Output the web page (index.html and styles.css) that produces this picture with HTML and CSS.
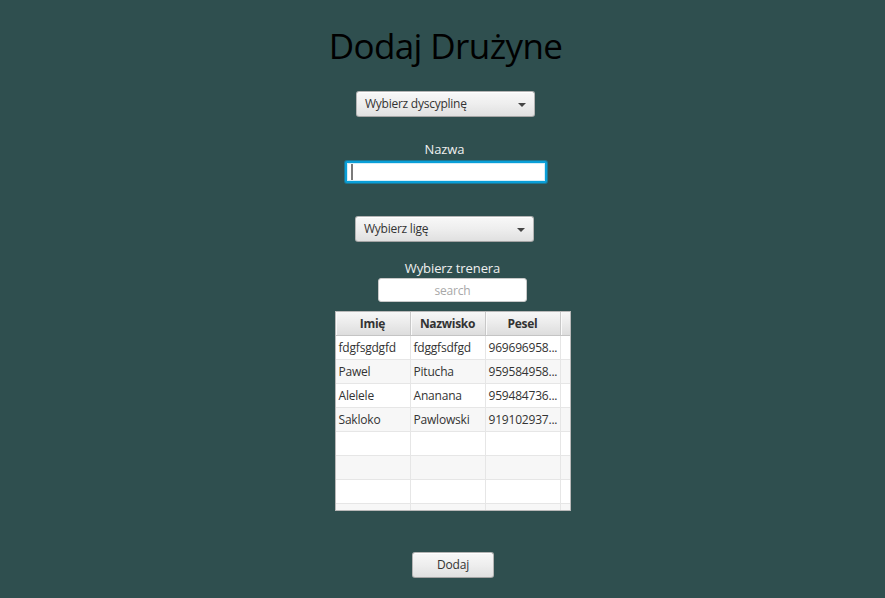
FILE: index.html
```html
<!DOCTYPE html>
<html lang="pl">
<head>
<meta charset="utf-8">
<title>Dodaj Drużyne</title>
<link rel="stylesheet" href="styles.css">
</head>
<body>
<main class="form">
  <h1 class="title">Dodaj Drużyne</h1>

  <div class="combo combo-discipline">
    <span class="combo-text">Wybierz dyscyplinę</span>
    <span class="combo-arrow"></span>
  </div>

  <label class="label label-name">Nazwa</label>
  <div class="field"><span class="caret"></span></div>

  <div class="combo combo-league">
    <span class="combo-text">Wybierz ligę</span>
    <span class="combo-arrow"></span>
  </div>

  <label class="label label-coach">Wybierz trenera</label>
  <div class="search">search</div>

  <div class="table">
    <div class="row head">
      <div class="cell c1">Imię</div>
      <div class="cell c2">Nazwisko</div>
      <div class="cell c3">Pesel</div>
      <div class="cell c4"></div>
    </div>
    <div class="row">
      <div class="cell c1">fdgfsgdgfd</div>
      <div class="cell c2">fdggfsdfgd</div>
      <div class="cell c3">969696958...</div>
      <div class="cell c4"></div>
    </div>
    <div class="row alt">
      <div class="cell c1">Pawel</div>
      <div class="cell c2">Pitucha</div>
      <div class="cell c3">959584958...</div>
      <div class="cell c4"></div>
    </div>
    <div class="row">
      <div class="cell c1">Alelele</div>
      <div class="cell c2">Ananana</div>
      <div class="cell c3">959484736...</div>
      <div class="cell c4"></div>
    </div>
    <div class="row alt">
      <div class="cell c1">Sakloko</div>
      <div class="cell c2">Pawlowski</div>
      <div class="cell c3">919102937...</div>
      <div class="cell c4"></div>
    </div>
    <div class="row">
      <div class="cell c1"></div><div class="cell c2"></div><div class="cell c3"></div><div class="cell c4"></div>
    </div>
    <div class="row alt">
      <div class="cell c1"></div><div class="cell c2"></div><div class="cell c3"></div><div class="cell c4"></div>
    </div>
    <div class="row">
      <div class="cell c1"></div><div class="cell c2"></div><div class="cell c3"></div><div class="cell c4"></div>
    </div>
    <div class="row alt">
      <div class="cell c1"></div><div class="cell c2"></div><div class="cell c3"></div><div class="cell c4"></div>
    </div>
  </div>

  <button class="button" type="button">Dodaj</button>
</main>
</body>
</html>
```

FILE: styles.css
```css
html, body {
  margin: 0;
  padding: 0;
}

body {
  background: #2f4f4f;
  width: 885px;
  height: 598px;
  overflow: hidden;
  font-family: "Open Sans", "Noto Sans", "DejaVu Sans", sans-serif;
  color: #333333;
}

.form {
  display: flex;
  flex-direction: column;
  align-items: center;
  padding-top: 24px;
}

.title {
  margin: 0 0 0 6px;
  font-size: 35px;
  line-height: 43px;
  letter-spacing: -0.6px;
  font-weight: 400;
  color: #000000;
}

.combo {
  box-sizing: border-box;
  width: 179px;
  height: 26px;
  display: flex;
  align-items: center;
  justify-content: space-between;
  padding: 0 8px 0 8px;
  border: 1px solid #b4b4b4;
  border-bottom-color: #a4a4a4;
  border-radius: 3px;
  background: linear-gradient(to bottom, #f8f8f8 0%, #eeeeee 50%, #e0e0e0 100%);
  box-shadow: inset 0 1px 0 #ffffff;
}

.combo-discipline {
  margin: 24px 0 0 6px;
}

.combo-league {
  margin: 33px 0 0 4px;
}

.combo-text {
  font-size: 12px;
  line-height: 16px;
  letter-spacing: -0.25px;
  color: #333333;
}

.combo-arrow {
  width: 0;
  height: 0;
  border-left: 4px solid transparent;
  border-right: 4px solid transparent;
  border-top: 4px solid #444444;
  margin-top: 1px;
}

.label {
  display: block;
  font-size: 13px;
  line-height: 16px;
  letter-spacing: -0.1px;
  color: #f0f0f0;
}

.label-name {
  margin: 24px 0 0 4px;
}

.label-coach {
  margin: 18px 0 0 20px;
}

.field {
  box-sizing: border-box;
  width: 202px;
  height: 22px;
  margin: 4px 0 0 6px;
  border: 2px solid #0a9fd8;
  border-radius: 2px;
  background: #ffffff;
  box-shadow: 0 0 0 1px rgba(10, 159, 216, 0.5), inset 0 0 0 1px #d4eef8;
  display: flex;
  align-items: center;
  padding-left: 4px;
}

.caret {
  display: block;
  width: 2px;
  height: 16px;
  background: #7a7a7a;
}

.search {
  box-sizing: border-box;
  width: 149px;
  height: 24px;
  margin: 2px 0 0 20px;
  border: 1px solid #c8c8c8;
  border-radius: 3px;
  background: #ffffff;
  font-size: 12px;
  line-height: 24px;
  letter-spacing: -0.2px;
  text-align: center;
  color: #a8a8a8;
}

.table {
  box-sizing: border-box;
  width: 236px;
  height: 200px;
  margin: 9px 0 0 20px;
  border: 1px solid #b9b9b9;
  background: #ffffff;
  overflow: hidden;
}

.row {
  display: flex;
  height: 24px;
  border-bottom: 1px solid #e6e6e6;
  box-sizing: border-box;
  background: #ffffff;
}

.row.alt {
  background: #f7f7f7;
}

.row.head {
  height: 24px;
  border-bottom: 1px solid #c4c4c4;
  background: linear-gradient(to bottom, #f7f7f7 0%, #ebebeb 50%, #dddddd 100%);
}

.cell {
  box-sizing: border-box;
  border-right: 1px solid #e6e6e6;
  font-size: 12px;
  line-height: 23px;
  letter-spacing: -0.2px;
  padding-left: 3px;
  white-space: nowrap;
  overflow: hidden;
  color: #333333;
}

.c1 { width: 75px; }
.c2 { width: 75px; }
.c3 { width: 75px; }
.c4 { width: 9px; border-right: none; }

.head .cell {
  border-right: 1px solid #c8c8c8;
  box-shadow: inset 1px 0 0 #fafafa;
  font-weight: 700;
  letter-spacing: -0.3px;
  text-align: center;
  padding-left: 0;
  color: #333333;
}

.head .c4 {
  border-right: none;
}

.button {
  box-sizing: border-box;
  width: 82px;
  height: 26px;
  margin: 41px 0 0 21px;
  padding: 0;
  border: 1px solid #b4b4b4;
  border-bottom-color: #a4a4a4;
  border-radius: 3px;
  background: linear-gradient(to bottom, #f8f8f8 0%, #eeeeee 50%, #e0e0e0 100%);
  box-shadow: inset 0 1px 0 #ffffff;
  font-family: "Open Sans", "Noto Sans", "DejaVu Sans", sans-serif;
  font-size: 12px;
  line-height: 22px;
  letter-spacing: -0.2px;
  color: #333333;
}
```
